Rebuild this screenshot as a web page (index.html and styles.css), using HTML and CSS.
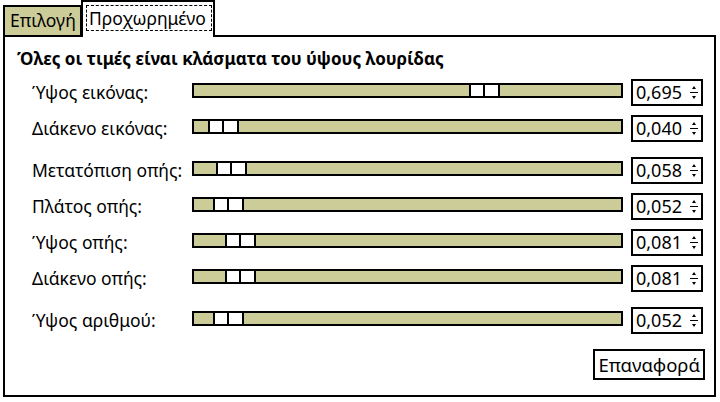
FILE: index.html
```html
<!DOCTYPE html>
<html>
<head>
<meta charset="utf-8">
<link rel="stylesheet" href="styles.css">
</head>
<body>
<div class="tabs">
  <div class="tab">Επιλογή</div>
  <div class="tab active"><span class="focus">Προχωρημένο</span></div>
</div>
<div class="panel">
  <div class="heading">Όλες οι τιμές είναι κλάσματα του ύψους λουρίδας</div>
  <div class="rows">
    <div class="row"><span class="label">Ύψος εικόνας:</span><div class="track"><div class="handle" style="left:275px"></div></div><div class="spin"><span class="val">0,695</span><svg class="arr" width="8" height="16" viewBox="0 0 8 16"><path d="M4 2 L6 5 L2 5 Z M0 8 H8 V9 H0 Z M2 12 L6 12 L4 15 Z" fill="#000"/></svg></div></div>
    <div class="row"><span class="label">Διάκενο εικόνας:</span><div class="track"><div class="handle" style="left:14px"></div></div><div class="spin"><span class="val">0,040</span><svg class="arr" width="8" height="16" viewBox="0 0 8 16"><path d="M4 2 L6 5 L2 5 Z M0 8 H8 V9 H0 Z M2 12 L6 12 L4 15 Z" fill="#000"/></svg></div></div>
    <div class="row gap"><span class="label">Μετατόπιση οπής:</span><div class="track"><div class="handle" style="left:22px"></div></div><div class="spin"><span class="val">0,058</span><svg class="arr" width="8" height="16" viewBox="0 0 8 16"><path d="M4 2 L6 5 L2 5 Z M0 8 H8 V9 H0 Z M2 12 L6 12 L4 15 Z" fill="#000"/></svg></div></div>
    <div class="row"><span class="label">Πλάτος οπής:</span><div class="track"><div class="handle" style="left:19px"></div></div><div class="spin"><span class="val">0,052</span><svg class="arr" width="8" height="16" viewBox="0 0 8 16"><path d="M4 2 L6 5 L2 5 Z M0 8 H8 V9 H0 Z M2 12 L6 12 L4 15 Z" fill="#000"/></svg></div></div>
    <div class="row"><span class="label">Ύψος οπής:</span><div class="track"><div class="handle" style="left:31px"></div></div><div class="spin"><span class="val">0,081</span><svg class="arr" width="8" height="16" viewBox="0 0 8 16"><path d="M4 2 L6 5 L2 5 Z M0 8 H8 V9 H0 Z M2 12 L6 12 L4 15 Z" fill="#000"/></svg></div></div>
    <div class="row"><span class="label">Διάκενο οπής:</span><div class="track"><div class="handle" style="left:31px"></div></div><div class="spin"><span class="val">0,081</span><svg class="arr" width="8" height="16" viewBox="0 0 8 16"><path d="M4 2 L6 5 L2 5 Z M0 8 H8 V9 H0 Z M2 12 L6 12 L4 15 Z" fill="#000"/></svg></div></div>
    <div class="row gap"><span class="label">Ύψος αριθμού:</span><div class="track"><div class="handle" style="left:19px"></div></div><div class="spin"><span class="val">0,052</span><svg class="arr" width="8" height="16" viewBox="0 0 8 16"><path d="M4 2 L6 5 L2 5 Z M0 8 H8 V9 H0 Z M2 12 L6 12 L4 15 Z" fill="#000"/></svg></div></div>
  </div>
  <div class="footer"><div class="btn">Επαναφορά</div></div>
</div>
</body>
</html>
```

FILE: styles.css
```css
html, body {
  margin: 0;
  padding: 0;
  background: #fff;
  width: 720px;
  height: 402px;
  overflow: hidden;
  font-family: "Noto Sans", "Open Sans", sans-serif;
  color: #000;
}
.tabs {
  display: flex;
  align-items: flex-end;
  margin-left: 3px;
  height: 37px;
  position: relative;
  z-index: 2;
  margin-bottom: -2px;
}
.tab {
  box-sizing: border-box;
  height: 32px;
  width: 79px;
  background: #cccc99;
  border: 2px solid #000;
  font-size: 17.5px;
  line-height: 26px;
  padding-left: 5px;
  white-space: nowrap;
}
.tab.active {
  height: 37px;
  width: 134px;
  margin-left: -1px;
  background: #fff;
  border-bottom: none;
  padding: 3px 2px 0 3px;
}
.focus {
  display: block;
  border: 1px dashed #000;
  height: 26px;
  line-height: 24px;
  padding-left: 2px;
  box-sizing: border-box;
  width: 126px;
  overflow: hidden;
}
.panel {
  box-sizing: border-box;
  margin-left: 3px;
  width: 713px;
  height: 362px;
  border: 2px solid #000;
  display: flex;
  flex-direction: column;
}
.heading {
  font-weight: bold;
  font-size: 17px;
  line-height: 22px;
  margin-top: 11px;
  padding-left: 12px;
  white-space: nowrap;
}
.rows {
  display: flex;
  flex-direction: column;
  margin-top: 4px;
  padding-left: 27px;
}
.row {
  display: flex;
  align-items: center;
  height: 36px;
}
.row.gap {
  margin-top: 6px;
}
.label {
  width: 160px;
  font-size: 17.5px;
  white-space: nowrap;
}
.track {
  position: relative;
  box-sizing: border-box;
  width: 431px;
  height: 15px;
  background: #cccc99;
  border: 2px solid #000;
  margin-bottom: 4px;
}
.handle {
  position: absolute;
  top: 0;
  bottom: 0;
  width: 27px;
  background: #fff;
  border-left: 2px solid #000;
  border-right: 2px solid #000;
}
.handle::after {
  content: "";
  position: absolute;
  left: 12px;
  top: 0;
  bottom: 0;
  width: 2px;
  background: #000;
}
.spin {
  box-sizing: border-box;
  margin-left: 8px;
  width: 72px;
  height: 27px;
  border: 2px solid #000;
  display: flex;
  align-items: center;
  padding-left: 3px;
  font-size: 18px;
}
.val {
  width: 54px;
}
.arr {
  display: block;
}
.footer {
  display: flex;
  justify-content: flex-end;
  padding-right: 9px;
  margin-top: 11px;
}
.btn {
  box-sizing: border-box;
  height: 31px;
  border: 2px solid #000;
  padding: 0 3px;
  font-size: 18.5px;
  line-height: 27px;
}
```
